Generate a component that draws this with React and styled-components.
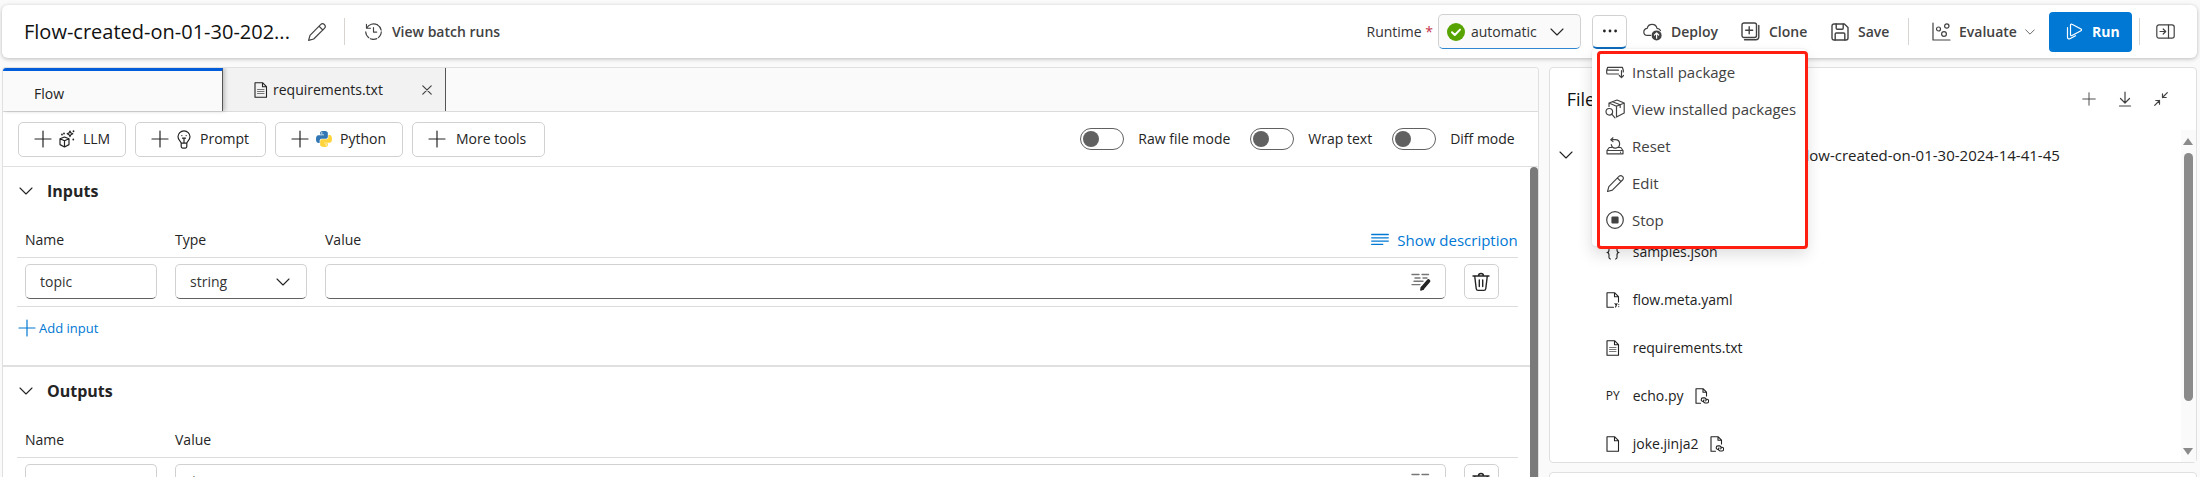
import React from "react";
import styled, { createGlobalStyle, css } from "styled-components";

const GlobalStyle = createGlobalStyle`
  *, *::before, *::after { box-sizing: border-box; }
  body {
    margin: 0;
    background: #fafafa;
    color: #242424;
    font-family: "Open Sans", "Noto Sans", sans-serif;
    font-size: 14px;
    line-height: 20px;
  }
  button, input, select { font: inherit; color: inherit; margin: 0; }
  h1, h2 { margin: 0; }
`;

/* ---------- Icons ---------- */

const Svg = styled.svg`
  display: block;
  flex: none;
  width: ${(p) => p.$w || 18}px;
  height: ${(p) => p.$h || p.$w || 18}px;
  fill: none;
  stroke: currentColor;
  stroke-width: ${(p) => p.$sw || 1.2};
  stroke-linecap: round;
  stroke-linejoin: round;
`;

const PencilIcon = ({ size = 20 }) => (
  <Svg $w={size} viewBox="0 0 20 20" aria-hidden="true">
    <path d="M13.6 2.6a2.6 2.6 0 0 1 3.8 3.7L6.7 17 1.6 18.4 3 13.3zM12 4.2l3.8 3.8" />
  </Svg>
);
const HistoryIcon = () => (
  <Svg $w={19} viewBox="0 0 20 20" aria-hidden="true">
    <path d="M2.6 2.4v4.2h4.2M2.9 6.4A8.2 8.2 0 0 1 14 2.9M10 5.8v4.8h3.4" />
    <path d="M14 2.9A8.2 8.2 0 1 1 1.8 9.6" strokeDasharray="7 1.8" />
  </Svg>
);
const ChevronIcon = ({ w = 14 }) => (
  <Svg $w={w} $h={w / 2 + 1} viewBox="0 0 14 8" $sw={1.1} aria-hidden="true">
    <path d="m1 1 6 6 6-6" />
  </Svg>
);
const PlusIcon = ({ size = 18 }) => (
  <Svg $w={size} viewBox="0 0 18 18" aria-hidden="true">
    <path d="M9 1v16M1 9h16" />
  </Svg>
);
const CloseIcon = () => (
  <Svg $w={10} viewBox="0 0 10 10" aria-hidden="true">
    <path d="m.8.8 8.4 8.4M9.2.8.8 9.2" />
  </Svg>
);
const CheckIcon = () => (
  <Svg $w={18} viewBox="0 0 18 18" aria-hidden="true">
    <circle cx="9" cy="9" r="9" fill="#57a300" stroke="none" />
    <path d="m5 9.2 2.8 2.8L13 6.6" stroke="#fff" strokeWidth="2" />
  </Svg>
);
const DotsIcon = () => (
  <Svg $w={16} $h={4} viewBox="0 0 16 4" aria-hidden="true">
    <g fill="currentColor" stroke="none">
      <circle cx="2.4" cy="2" r="1.4" />
      <circle cx="8" cy="2" r="1.4" />
      <circle cx="13.6" cy="2" r="1.4" />
    </g>
  </Svg>
);
const DeployIcon = () => (
  <Svg $w={19} viewBox="0 0 19 19" aria-hidden="true">
    <path d="M7.6 13.4H4.4a3.5 3.5 0 0 1-.2-7 5 5 0 0 1 9.8 0c1.6.1 2.8.8 3.5 2.1" />
    <circle cx="13.6" cy="13.4" r="5" fill="currentColor" stroke="none" />
    <path d="M13.6 16.2v-5.2M11.5 13l2.1-2.1 2.1 2.1" stroke="#fff" />
  </Svg>
);
const CloneIcon = () => (
  <Svg $w={19} viewBox="0 0 19 19" $sw={1.4} aria-hidden="true">
    <rect x="1" y="1" width="14.5" height="14.5" rx="2" />
    <path d="M8.2 4.8v7M4.7 8.3h7M17.8 3.5v11.3a3 3 0 0 1-3 3H3.5" />
  </Svg>
);
const SaveIcon = () => (
  <Svg $w={18} viewBox="0 0 18 18" $sw={1.4} aria-hidden="true">
    <path d="M3 1h10.4L17 4.6V15a2 2 0 0 1-2 2H3a2 2 0 0 1-2-2V3a2 2 0 0 1 2-2z" />
    <path d="M5.2 1v4.2a1 1 0 0 0 1 1h5a1 1 0 0 0 1-1V1M4.2 17v-6a1 1 0 0 1 1-1h7.6a1 1 0 0 1 1 1v6" />
  </Svg>
);
const EvaluateIcon = () => (
  <Svg $w={19} viewBox="0 0 19 19" aria-hidden="true">
    <path d="M1 1v17h17" />
    <circle cx="6.5" cy="7" r="2" />
    <circle cx="14.8" cy="4" r="2.2" />
    <circle cx="12" cy="12" r="2.4" />
  </Svg>
);
const RunIcon = () => (
  <Svg $w={17} viewBox="0 0 17 17" aria-hidden="true">
    <path d="M4.5 2.2v9.6c0 .8.8 1.2 1.5.8l9-4.9c.7-.4.7-1.3 0-1.7l-9-4.7c-.7-.4-1.5.1-1.5.9z" />
    <path d="M1.5 4.6v9.6c0 1.4 1.2 2.1 2.4 1.5l5.6-3" />
  </Svg>
);
const PanelIcon = () => (
  <Svg $w={19} $h={15} viewBox="0 0 19 15" aria-hidden="true">
    <rect x=".8" y=".8" width="17.4" height="13.4" rx="2.2" />
    <path d="M12.5 1v13M4 7.5h5.5M7.2 5l2.5 2.5L7.2 10" />
  </Svg>
);
const FileIcon = ({ kind }) => (
  <Svg $w={14} $h={16} viewBox="0 0 14 16" $sw={1.1} aria-hidden="true">
    {kind === "yaml" ? (
      <path d="M7.5 15.3H1V.7h7.5L12.5 4.7v5.3M8.5.7v4h4M9 11.5l1 1.5m1-1.5-1.4 3.5M12.8 12.5v.1M12.8 14.5v.1" />
    ) : kind === "link" ? (
      <path d="M5.5 15.3H1V.7h7L11.5 4.2V8M8 .7v3.5h3.5M8.2 13.5H8a1.8 1.8 0 0 1 0-3.6h1.5a1.8 1.8 0 0 1 1.2 3M10.8 11.3h1a1.8 1.8 0 0 1 0 3.7H10a1.8 1.8 0 0 1-1-3" />
    ) : (
      <path d="M1 .7h7.5L12.5 4.7v10.6H1zM8.5.7v4h4" />
    )}
    {kind === "text" && <path d="M3.5 7.5H10M3.5 9.5H10M3.5 11.5H10" stroke="#777" />}
  </Svg>
);
const LlmIcon = () => (
  <Svg $w={16} $h={18} viewBox="0 0 16 18" aria-hidden="true">
    <path d="M1 8.8 5.5 7l4.5 1.8v5.8L5.5 17 1 14.6zM1 8.8l4.5 2 4.5-2M5.5 10.8V17" />
    <path d="m11 1 .9 1.9 1.9.9-1.9.9-.9 1.9-.9-1.9-1.9-.9 1.9-.9z" />
    <path d="M5 3.5v.1M14.5 1.2v.1M14.3 9.5v.1M3 4.5v.1" strokeWidth="1.8" />
  </Svg>
);
const BulbIcon = () => (
  <Svg $w={14} $h={19} viewBox="0 0 14 19" aria-hidden="true">
    <path d="M4.2 13.2C4 11 1 10.2 1 6.8a6 6 0 0 1 12 0c0 3.4-3 4.2-3.2 6.4zM4.2 13.2v3.4c0 .9.6 1.5 1.4 1.5h2.8c.8 0 1.4-.6 1.4-1.5v-3.4M7 8v5M4.8 5.6l.1.1M9.2 5.6l-.1.1M5.5 8.2h3" />
  </Svg>
);
const PythonIcon = () => (
  <Svg $w={16} viewBox="0 0 256 255" aria-hidden="true">
    <path stroke="none" fill="#3277b3" d="M126.916.072c-64.832 0-60.784 28.115-60.784 28.115l.072 29.128h61.868v8.745H41.631S.145 61.355.145 126.77c0 65.417 36.21 63.097 36.21 63.097h21.61v-30.356s-1.165-36.21 35.632-36.21h61.362s34.475.557 34.475-33.319V33.97S194.67.072 126.916.072zM92.802 19.66a11.12 11.12 0 0 1 11.13 11.13 11.12 11.12 0 0 1-11.13 11.13 11.12 11.12 0 0 1-11.13-11.13 11.12 11.12 0 0 1 11.13-11.13z" />
    <path stroke="none" fill="#ffd43b" d="M128.757 254.126c64.832 0 60.784-28.115 60.784-28.115l-.072-29.127H127.6v-8.745h86.441s41.486 4.705 41.486-60.712c0-65.416-36.21-63.096-36.21-63.096h-21.61v30.355s1.165 36.21-35.632 36.21h-61.362s-34.475-.557-34.475 33.32v56.013s-5.235 33.897 62.518 33.897zm34.114-19.586a11.12 11.12 0 0 1-11.13-11.13 11.12 11.12 0 0 1 11.13-11.131 11.12 11.12 0 0 1 11.13 11.13 11.12 11.12 0 0 1-11.13 11.13z" />
  </Svg>
);
const LinesIcon = () => (
  <Svg $w={18} $h={13} viewBox="0 0 18 13" $sw={1.3} aria-hidden="true">
    <path d="M.7 1.5h16.6M.7 4.8h16.6M.7 8.1h16.6M.7 11.4h11" />
  </Svg>
);
const EditTextIcon = () => (
  <Svg $w={20} viewBox="0 0 20 20" $sw={1.4} aria-hidden="true">
    <path d="M1 2.5h7M11 2.5h6.5M4 6h5M12 6h4M3 9.3h9M1 12.6h8" stroke="#777" />
    <path d="m11.5 16 6-7" strokeWidth="3.6" />
    <path d="m9.8 18 .8-2.8 1.8 1.8z" fill="currentColor" />
  </Svg>
);
const TrashIcon = () => (
  <Svg $w={18} $h={20} viewBox="0 0 18 20" $sw={1.4} aria-hidden="true">
    <path d="M1 4h16M6.5 4a2.5 2.5 0 0 1 5 0M2.7 4l1.5 12.5c.1 1.1.9 1.9 2 1.9h5.6c1.1 0 1.9-.8 2-1.9L15.3 4M7.3 8v6.5M10.7 8v6.5" />
  </Svg>
);
const DownloadIcon = () => (
  <Svg $w={14} $h={16} viewBox="0 0 14 16" aria-hidden="true">
    <path d="M7 1v10.5M2.5 7.5 7 12l4.5-4.5M1.5 15h11" />
  </Svg>
);
const CollapseIcon = () => (
  <Svg $w={14} viewBox="0 0 14 14" aria-hidden="true">
    <path d="M13.3.7 8.5 5.5M8.5 1.8v3.7h3.7M.7 13.3l4.8-4.8M1.8 8.5h3.7v3.7" />
  </Svg>
);
const BracesIcon = () => (
  <Svg $w={14} $h={15} viewBox="0 0 14 15" $sw={1.1} aria-hidden="true">
    <path d="M4.5 1C2.5 1 3 3.5 3 5S2.5 7.5 1 7.5C2.5 7.5 3 8.5 3 10s-.5 4 1.5 4M9.5 1C11.5 1 11 3.5 11 5s.5 2.5 2 2.5c-1.5 0-2 1-2 2.5s.5 4-1.5 4" />
  </Svg>
);
const InstallIcon = () => (
  <Svg $w={18} $h={14} viewBox="0 0 18 14" aria-hidden="true">
    <path d="M12.5 9H1.7a1 1 0 0 1-1-1V5.2L1.7 2.3h14.6l1 2.9V7M1 5.2h11.5M15.5 5.5v7M13.3 10.5l2.2 2.2 2.2-2.2" />
  </Svg>
);
const PackageSearchIcon = () => (
  <Svg $w={20} viewBox="0 0 20 20" aria-hidden="true">
    <path d="M4 7.5V4L12 1l7.2 3v10L11.5 18M4 4l7.5 3.2L19.2 4M11.5 7.2V18M7.5 2.7l7.7 3v2.8" />
    <circle cx="4.3" cy="12.8" r="3.3" />
    <path d="m6.7 15.2 3.3 3.6" />
  </Svg>
);
const ResetIcon = () => (
  <Svg $w={18} viewBox="0 0 18 18" aria-hidden="true">
    <path d="M5.5 10.5H3.2L1 13.5v3.3h16v-3.3l-2.2-3h-2.3M1 13.5h16M14.5 15.2v.1M7 .8 4.8 2.7 7 4.6M5 2.7h4.5a4.2 4.2 0 1 1-4.2 5" />
  </Svg>
);
const StopIcon = () => (
  <Svg $w={18} viewBox="0 0 18 18" aria-hidden="true">
    <circle cx="9" cy="9" r="8.3" />
    <rect x="6" y="6" width="6" height="6" rx=".5" fill="currentColor" />
  </Svg>
);

/* ---------- Page frame ---------- */

const Page = styled.div`
  display: flex;
  flex-direction: column;
  gap: 9px;
  height: 100vh;
  padding: 5px 3px 0 2px;
  overflow: hidden;
`;

const Header = styled.header`
  position: relative;
  z-index: 2;
  display: flex;
  align-items: center;
  justify-content: space-between;
  flex: none;
  height: 53px;
  padding: 0 7px 0 22px;
  background: #fff;
  border-radius: 6px;
  box-shadow: 0 1px 4px rgba(0, 0, 0, 0.26);
`;

const HeaderGroup = styled.div`
  display: flex;
  align-items: center;
`;

const FlowTitle = styled.h1`
  padding: 1px 0 0;
  font-size: 20px;
  line-height: 26px;
  font-weight: 500;
  color: #111;
  white-space: nowrap;
`;

const IconButton = styled.button`
  display: flex;
  align-items: center;
  justify-content: center;
  flex: none;
  width: ${(p) => p.$w || 36}px;
  height: 32px;
  padding: 0;
  border: 0;
  background: none;
  color: #424242;
`;

const Divider = styled.span`
  width: 1px;
  height: 27px;
  background: #d8d4d2;
`;

const TextButton = styled.button`
  display: flex;
  align-items: center;
  gap: 9px;
  width: ${(p) => (p.$w ? `${p.$w}px` : "auto")};
  height: 32px;
  padding: 0;
  border: 0;
  background: none;
  font-weight: 600;
  color: #424242;
  white-space: nowrap;
`;

const HistoryButton = styled(TextButton)`
  margin-left: 19px;
`;

const EvaluateButton = styled(TextButton)`
  gap: 8px;
  margin-left: 23px;
`;

const RuntimeLabel = styled.label`
  padding-right: 5px;
  color: #333;
  span { color: #c4314b; }
`;

const SelectBox = styled.div`
  display: flex;
  align-items: center;
  width: ${(p) => p.$w};
  height: 35px;
  padding: 0 16px 0 ${(p) => (p.$runtime ? 8 : 14)}px;
  gap: 6px;
  border: 1px solid #d1d1d1;
  border-bottom-color: ${(p) => (p.$runtime ? "#2f87d0" : "#616161")};
  border-radius: 5px;
  background: ${(p) => (p.$runtime ? "#fafafa" : "#fff")};
  select {
    flex: 1;
    min-width: 0;
    padding: 0;
    border: 0;
    outline: 0;
    background: none;
    appearance: none;
    color: #333;
  }
`;

const MenuAnchor = styled.div`
  position: relative;
  margin: 0 16px 0 11px;
`;

const MoreButton = styled.button`
  display: flex;
  align-items: center;
  justify-content: center;
  width: 35px;
  height: 34px;
  padding: 0;
  border: 1px solid #d1d1d1;
  border-bottom: 2px solid #0f6cbd;
  border-radius: 5px;
  background: #fff;
`;

const RunButton = styled.button`
  display: flex;
  align-items: center;
  gap: 9px;
  width: 83px;
  height: 40px;
  margin: 0 7px 0 16px;
  padding: 0 0 0 17px;
  border: 0;
  border-radius: 4px;
  background: #0078d4;
  color: #fff;
  font-weight: 700;
`;

/* ---------- Overflow menu ---------- */

const Menu = styled.div`
  position: absolute;
  top: 34px;
  left: 0;
  width: 215px;
  padding: 2px 0 0 5px;
  border-radius: 4px;
  background: #fff;
  box-shadow: 0 8px 16px rgba(0, 0, 0, 0.14), 0 0 2px rgba(0, 0, 0, 0.12);
`;

const MenuList = styled.ul`
  width: 211px;
  height: 198px;
  margin: 0 0 -3px;
  padding: 0;
  list-style: none;
  border: 3px solid #ff1e0f;
  border-radius: 4px;
`;

const MenuItem = styled.button`
  display: flex;
  align-items: center;
  width: 100%;
  height: 37px;
  padding: 0 0 0 4px;
  border: 0;
  background: none;
  color: #424242;
  font-size: 15px;
  white-space: nowrap;
  text-align: left;
`;

const MenuIcon = styled.span`
  display: flex;
  justify-content: center;
  flex: none;
  width: 22px;
  margin-right: 6px;
`;

/* ---------- Editor ---------- */

const Body = styled.main`
  display: grid;
  grid-template-columns: minmax(0, 64fr) minmax(0, 27fr);
  gap: 10px;
  flex: 1;
  min-height: 0;
`;

const Editor = styled.section`
  display: flex;
  flex-direction: column;
  min-height: 0;
  overflow: hidden;
  border: 1px solid #e0e0e0;
  border-bottom: 0;
  border-radius: 4px 4px 0 0;
  background: #fff;
`;

const Tabs = styled.div`
  display: flex;
  flex: none;
  height: 44px;
  border-bottom: 1px solid #dcdcdc;
  background: #fafafa;
`;

const Tab = styled.div`
  position: relative;
  display: flex;
  align-items: center;
  width: 223px;
  padding: 1px 13px 0 31px;
  border-right: 1px solid #555;
  background: #f2f2f2;
  color: #222;
  ${(p) =>
    p.$active &&
    css`
      z-index: 1;
      width: 220px;
      padding-top: 5px;
      border-top: 3px solid #015cda;
      background: #fafafa;
      box-shadow: 2px 0 4px rgba(0, 0, 0, 0.22);
    `}
`;

const TabButton = styled.button`
  display: flex;
  align-items: center;
  gap: 5px;
  flex: 1;
  padding: 0;
  border: 0;
  background: none;
`;

const CloseButton = styled.button`
  display: flex;
  padding: 0;
  border: 0;
  background: none;
  color: #424242;
`;

const Toolbar = styled.div`
  display: flex;
  align-items: center;
  justify-content: space-between;
  flex: none;
  height: 55px;
  padding: 0 23px 0 15px;
  border-bottom: 1px solid #e0e0e0;
`;

const ToolGroup = styled.div`
  display: flex;
  gap: ${(p) => p.$gap}px;
`;

const ToolButton = styled.button`
  display: flex;
  align-items: center;
  gap: 6px;
  width: ${(p) => p.$w}px;
  height: 35px;
  padding: 0 0 0 15px;
  border: 1px solid #d1d1d1;
  border-radius: 5px;
  background: #fff;
  color: #242424;
  font-weight: 500;
  white-space: nowrap;
`;

const ToolGlyph = styled.span`
  display: flex;
  justify-content: center;
  width: 18px;
`;

const ToolName = styled.span`
  padding-left: ${(p) => (p.$plain ? 4 : 1)}px;
`;

const ToggleLabel = styled.label`
  display: flex;
  align-items: center;
  gap: 14px;
`;

const Toggle = styled.input.attrs({ type: "checkbox", role: "switch" })`
  appearance: none;
  display: flex;
  align-items: center;
  width: 44px;
  height: 22px;
  padding: 0 2px;
  border: 1px solid #616161;
  border-radius: 11px;
  background: #fff;
  &::before {
    content: "";
    width: 16px;
    height: 16px;
    border-radius: 50%;
    background: #616161;
  }
  &:checked { justify-content: flex-end; }
`;

const ScrollArea = styled.div`
  display: flex;
  flex: 1;
  min-height: 0;
  overflow: hidden;
`;

const Sections = styled.div`
  flex: 1;
  min-width: 0;
`;

const EditorThumb = styled.div`
  flex: none;
  width: 8px;
  border-radius: 4px 4px 0 0;
  background: #7a7a7a;
`;

const Section = styled.section`
  height: 200px;
  padding: 8px 12px 0 14px;
  border-bottom: 2px solid #e0e0e0;
`;

const SectionToggle = styled.button`
  display: flex;
  align-items: center;
  gap: 14px;
  height: 32px;
  padding: 0 0 0 2px;
  border: 0;
  background: none;
`;

const SectionTitle = styled.h2`
  font-size: 16px;
  line-height: 24px;
  font-weight: 700;
`;

const Grid = styled.table`
  width: 100%;
  margin-top: 14px;
  border-collapse: collapse;
  table-layout: fixed;
  th, td {
    padding: 0 10px 0 8px;
    border-bottom: 1px solid #dcdcdc;
    text-align: left;
  }
  th { height: 36px; padding-top: 2px; font-weight: 500; }
  td { height: 49px; }
`;

const Col = styled.col`
  width: ${(p) => (p.$w ? `${p.$w}px` : "auto")};
`;

const SplitHead = styled.div`
  display: flex;
  justify-content: space-between;
`;

const DescriptionButton = styled.button`
  display: flex;
  align-items: center;
  gap: 8px;
  margin-right: -10px;
  padding: 0;
  border: 0;
  background: none;
  color: #0078d4;
  font-size: 15px;
  font-weight: 400;
`;

const Field = styled.div`
  display: flex;
  align-items: center;
  height: 35px;
  padding: 0 14px;
  border: 1px solid #d1d1d1;
  border-bottom-color: #616161;
  border-radius: 5px;
  background: #fff;
  input {
    flex: 1;
    min-width: 0;
    width: 100%;
    padding: 0;
    border: 0;
    outline: 0;
    background: none;
    color: #333;
  }
`;

const DeleteButton = styled.button`
  display: flex;
  align-items: center;
  justify-content: center;
  width: 35px;
  height: 35px;
  padding: 0;
  border: 1px solid #d1d1d1;
  border-radius: 5px;
  background: #fff;
`;

const AddButton = styled.button`
  display: flex;
  align-items: center;
  gap: 3px;
  margin: 11px 0 0 1px;
  padding: 0;
  border: 0;
  background: none;
  font-size: 13px;
  color: #0078d4;
`;

/* ---------- Files ---------- */

const Side = styled.aside`
  display: flex;
  flex-direction: column;
  gap: 9px;
  min-height: 0;
`;

const Card = styled.section`
  flex: none;
  min-height: 60px;
  border: 1px solid #e0e0e0;
  border-radius: 4px;
  background: #fff;
`;

const CardHead = styled.div`
  display: flex;
  align-items: center;
  justify-content: space-between;
  height: 62px;
  padding: 0 17px;
`;

const CardTitle = styled.h2`
  font-size: 18px;
  line-height: 26px;
  font-weight: 400;
  color: #111;
`;

const TreeArea = styled.div`
  display: flex;
  height: 332px;
`;

const Tree = styled.ul`
  flex: 1;
  margin: 0;
  padding: 0;
  list-style: none;
  color: #222;
  overflow: hidden;
`;

const TreeRow = styled.li`
  display: flex;
  align-items: center;
  height: ${(p) => (p.$root ? 50 : 48)}px;
  padding-left: ${(p) => (p.$root ? 9 : 56)}px;
  font-size: ${(p) => (p.$root ? 15 : 14)}px;
`;

const TreeGlyph = styled.span`
  display: flex;
  flex: none;
  width: ${(p) => (p.$root ? 239 : 27)}px;
  font-size: 12px;
`;

const LinkGlyph = styled.span`
  margin-left: 11px;
`;

const ScrollBar = styled.div`
  display: flex;
  flex-direction: column;
  align-items: center;
  flex: none;
  width: 15px;
  padding: 8px 0 7px;
  background: #fafafa;
`;

const ScrollThumb = styled.div`
  width: 9px;
  height: 248px;
  margin-top: 8px;
  border-radius: 5px;
  background: #8a8a8a;
`;

const ScrollArrow = styled.span`
  margin-top: ${(p) => (p.$down ? "auto" : 0)};
  border: 5px solid transparent;
  ${(p) =>
    p.$down
      ? "border-top: 7px solid #8a8a8a; border-bottom: 0;"
      : "border-bottom: 7px solid #8a8a8a; border-top: 0;"}
`;

const MENU = [
  ["Install package", <InstallIcon />],
  ["View installed packages", <PackageSearchIcon />],
  ["Reset", <ResetIcon />],
  ["Edit", <PencilIcon size={19} />],
  ["Stop", <StopIcon />],
];

const TOOLS = [
  ["LLM", <LlmIcon />, 108],
  ["Prompt", <BulbIcon />, 131],
  ["Python", <PythonIcon />, 128],
  ["More tools", null, 133],
];

const FILES = [
  { name: "flow.dag.yaml", icon: <FileIcon kind="yaml" /> },
  { name: "samples.json", icon: <BracesIcon /> },
  { name: "flow.meta.yaml", icon: <FileIcon kind="yaml" /> },
  { name: "requirements.txt", icon: <FileIcon kind="text" /> },
  { name: "echo.py", icon: "PY", linked: true },
  { name: "joke.jinja2", icon: <FileIcon />, linked: true },
];

function ValueField({ label, value = "" }) {
  return (
    <Field>
      <input aria-label={label} defaultValue={value} />
      <EditTextIcon />
    </Field>
  );
}

export default function App() {
  return (
    <Page>
      <GlobalStyle />
      <Header>
        <HeaderGroup>
          <FlowTitle>Flow-created-on-01-30-202...</FlowTitle>
          <IconButton $w={54} aria-label="Rename flow">
            <PencilIcon />
          </IconButton>
          <Divider />
          <HistoryButton>
            <HistoryIcon />
            View batch runs
          </HistoryButton>
        </HeaderGroup>
        <HeaderGroup>
          <RuntimeLabel htmlFor="runtime">
            Runtime <span>*</span>
          </RuntimeLabel>
          <SelectBox $runtime $w="143px">
            <CheckIcon />
            <select id="runtime" defaultValue="automatic">
              <option>automatic</option>
            </select>
            <ChevronIcon />
          </SelectBox>
          <MenuAnchor>
            <MoreButton aria-label="Runtime actions" aria-expanded="true">
              <DotsIcon />
            </MoreButton>
            <Menu>
              <MenuList>
                {MENU.map(([name, icon]) => (
                  <li key={name}>
                    <MenuItem>
                      <MenuIcon>{icon}</MenuIcon>
                      {name}
                    </MenuItem>
                  </li>
                ))}
              </MenuList>
            </Menu>
          </MenuAnchor>
          <TextButton $w={98}>
            <DeployIcon />
            Deploy
          </TextButton>
          <TextButton $w={90}>
            <CloneIcon />
            Clone
          </TextButton>
          <TextButton $w={77}>
            <SaveIcon />
            Save
          </TextButton>
          <Divider />
          <EvaluateButton $w={101}>
            <EvaluateIcon />
            Evaluate
            <ChevronIcon w={10} />
          </EvaluateButton>
          <RunButton>
            <RunIcon />
            Run
          </RunButton>
          <Divider />
          <IconButton $w={50} aria-label="Toggle side panel">
            <PanelIcon />
          </IconButton>
        </HeaderGroup>
      </Header>

      <Body>
        <Editor>
          <Tabs>
            <Tab $active>
              <TabButton>Flow</TabButton>
            </Tab>
            <Tab>
              <TabButton>
                <FileIcon kind="text" />
                requirements.txt
              </TabButton>
              <CloseButton aria-label="Close requirements.txt">
                <CloseIcon />
              </CloseButton>
            </Tab>
          </Tabs>
          <Toolbar>
            <ToolGroup $gap={9}>
              {TOOLS.map(([name, icon, width]) => (
                <ToolButton key={name} $w={width}>
                  <PlusIcon />
                  {icon ? <ToolGlyph>{icon}</ToolGlyph> : null}
                  <ToolName $plain={!icon}>{name}</ToolName>
                </ToolButton>
              ))}
            </ToolGroup>
            <ToolGroup $gap={20}>
              {["Raw file mode", "Wrap text", "Diff mode"].map((name) => (
                <ToggleLabel key={name}>
                  <Toggle />
                  {name}
                </ToggleLabel>
              ))}
            </ToolGroup>
          </Toolbar>
          <ScrollArea>
            <Sections>
              <Section>
                <SectionToggle>
                  <ChevronIcon />
                  <SectionTitle>Inputs</SectionTitle>
                </SectionToggle>
                <Grid>
                  <colgroup>
                    <Col $w={150} />
                    <Col $w={150} />
                    <Col />
                    <Col $w={62} />
                  </colgroup>
                  <thead>
                    <tr>
                      <th>Name</th>
                      <th>Type</th>
                      <th colSpan={2}>
                        <SplitHead>
                          Value
                          <DescriptionButton>
                            <LinesIcon />
                            Show description
                          </DescriptionButton>
                        </SplitHead>
                      </th>
                    </tr>
                  </thead>
                  <tbody>
                    <tr>
                      <td>
                        <Field>
                          <input aria-label="Input name" defaultValue="topic" />
                        </Field>
                      </td>
                      <td>
                        <SelectBox $w="auto">
                          <select aria-label="Input type" defaultValue="string">
                            <option>string</option>
                          </select>
                          <ChevronIcon />
                        </SelectBox>
                      </td>
                      <td>
                        <ValueField label="Input value" />
                      </td>
                      <td>
                        <DeleteButton aria-label="Delete input">
                          <TrashIcon />
                        </DeleteButton>
                      </td>
                    </tr>
                  </tbody>
                </Grid>
                <AddButton>
                  <PlusIcon />
                  Add input
                </AddButton>
              </Section>
              <Section>
                <SectionToggle>
                  <ChevronIcon />
                  <SectionTitle>Outputs</SectionTitle>
                </SectionToggle>
                <Grid>
                  <colgroup>
                    <Col $w={150} />
                    <Col />
                    <Col $w={62} />
                  </colgroup>
                  <thead>
                    <tr>
                      <th>Name</th>
                      <th colSpan={2}>Value</th>
                    </tr>
                  </thead>
                  <tbody>
                    <tr>
                      <td>
                        <Field>
                          <input aria-label="Output name" />
                        </Field>
                      </td>
                      <td>
                        <ValueField label="Output value" value="$" />
                      </td>
                      <td>
                        <DeleteButton aria-label="Delete output">
                          <TrashIcon />
                        </DeleteButton>
                      </td>
                    </tr>
                  </tbody>
                </Grid>
              </Section>
            </Sections>
            <EditorThumb />
          </ScrollArea>
        </Editor>

        <Side>
          <Card>
            <CardHead>
              <CardTitle>Files</CardTitle>
              <HeaderGroup>
                <IconButton aria-label="Add file">
                  <PlusIcon size={14} />
                </IconButton>
                <IconButton aria-label="Download files">
                  <DownloadIcon />
                </IconButton>
                <IconButton aria-label="Collapse files">
                  <CollapseIcon />
                </IconButton>
              </HeaderGroup>
            </CardHead>
            <TreeArea>
              <Tree>
                <TreeRow $root>
                  <TreeGlyph $root>
                    <ChevronIcon />
                  </TreeGlyph>
                  Flow-created-on-01-30-2024-14-41-45
                </TreeRow>
                {FILES.map((file) => (
                  <TreeRow key={file.name}>
                    <TreeGlyph>{file.icon}</TreeGlyph>
                    {file.name}
                    {file.linked ? (
                      <LinkGlyph>
                        <FileIcon kind="link" />
                      </LinkGlyph>
                    ) : null}
                  </TreeRow>
                ))}
              </Tree>
              <ScrollBar>
                <ScrollArrow />
                <ScrollThumb />
                <ScrollArrow $down />
              </ScrollBar>
            </TreeArea>
          </Card>
          <Card />
        </Side>
      </Body>
    </Page>
  );
}
